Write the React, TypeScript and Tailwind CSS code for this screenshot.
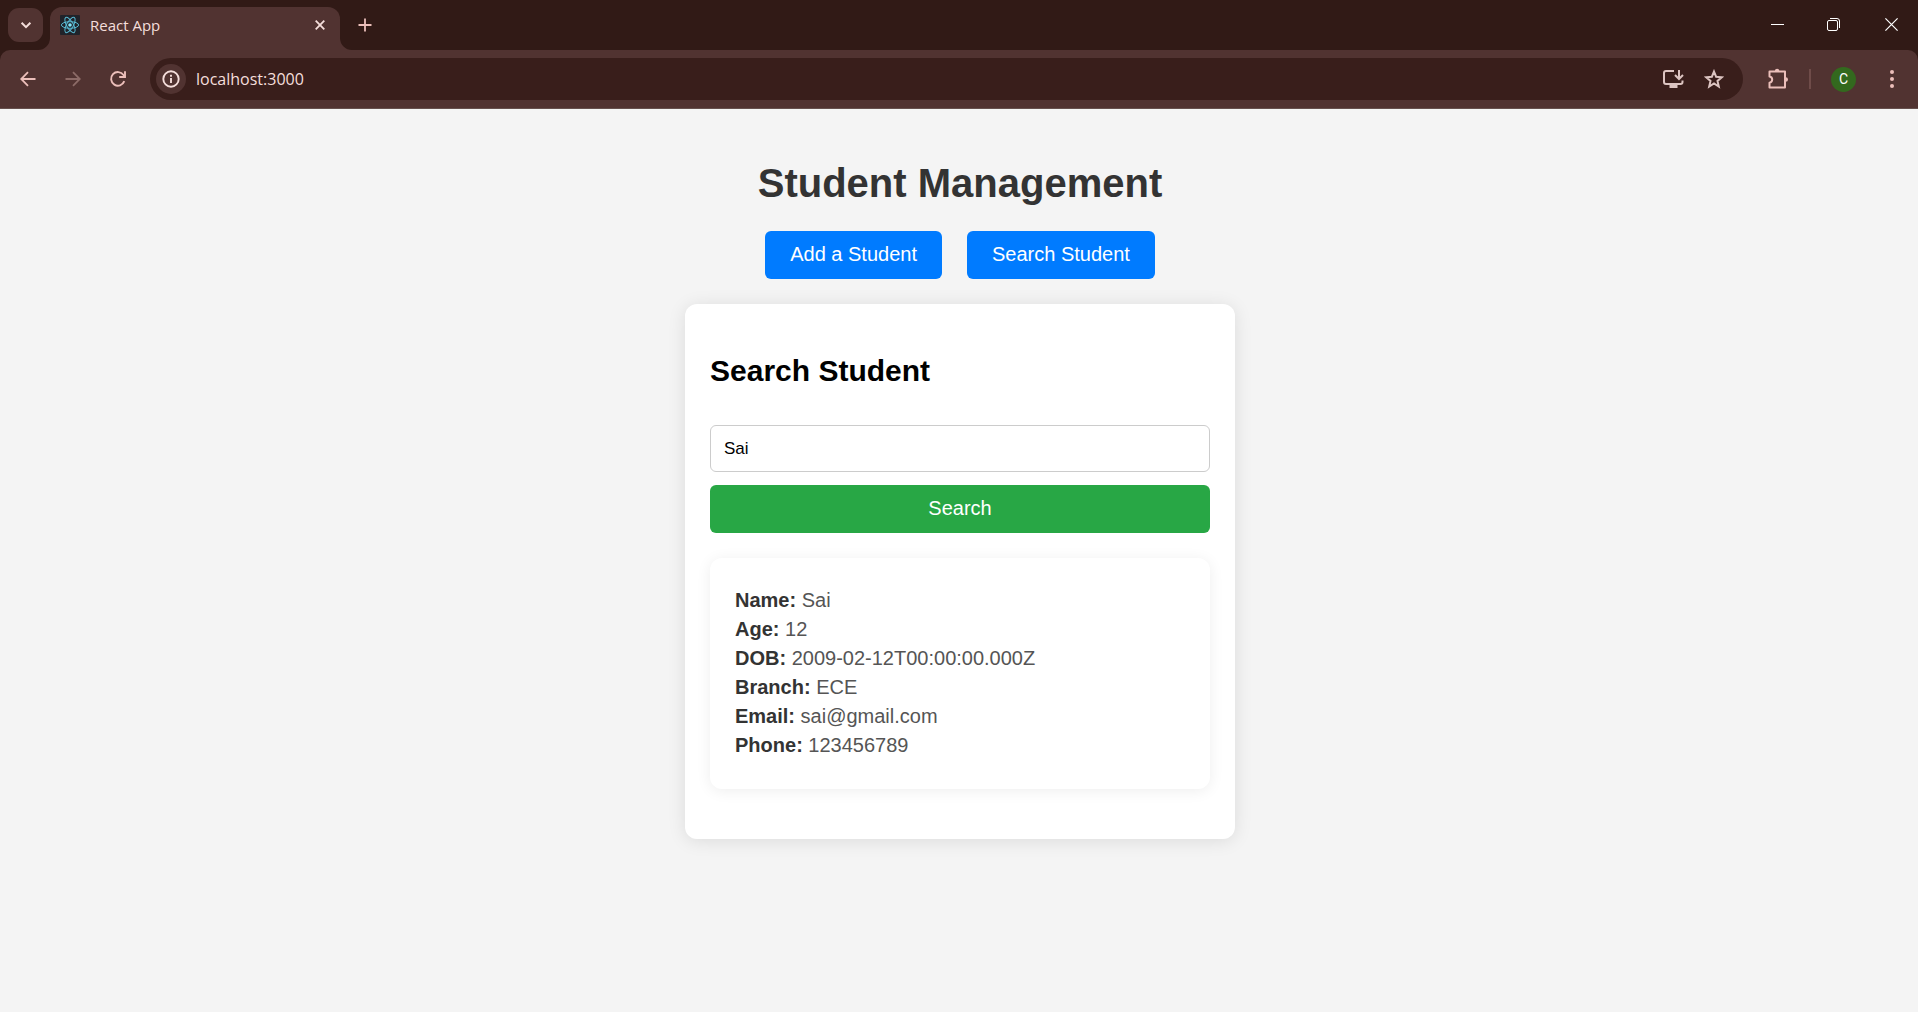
import React, { useState } from "react";

function ReactMark() {
  return (
    <svg viewBox="0 0 20 20" className="size-5 shrink-0" aria-hidden="true">
      <rect width="20" height="20" rx="1" fill="#20232a" />
      <g fill="none" stroke="#58b9d3" strokeWidth="1">
        <ellipse cx="10" cy="10" rx="8.6" ry="3.3" />
        <ellipse cx="10" cy="10" rx="8.6" ry="3.3" transform="rotate(60 10 10)" />
        <ellipse cx="10" cy="10" rx="8.6" ry="3.3" transform="rotate(120 10 10)" />
      </g>
      <circle cx="10" cy="10" r="1.8" fill="#7fe4fb" />
    </svg>
  );
}

function TabStrip() {
  return (
    <div className="flex h-[50px] items-start bg-[#311a16] text-[#f5dedb]">
      <button aria-label="Search tabs" className="mt-2 ml-2 flex h-[34px] w-[35px] items-center justify-center rounded-[11px] bg-[#513331]">
        <svg viewBox="0 0 12 12" className="size-3" fill="none" stroke="currentColor" strokeWidth="2">
          <path d="M1.6 3.8 6 8.2l4.400-4.400" />
        </svg>
      </button>
      <div className="relative mt-[7px] ml-[7px] flex h-[43px] w-[290px] items-start rounded-t-[12px] bg-[#513331] pt-2 pr-[15px] pl-[10px]">
        <svg viewBox="0 0 12 12" className="absolute bottom-0 -left-3 size-3" aria-hidden="true">
          <path d="M12 0v12H0A12 12 0 0 0 12 0Z" fill="#513331" />
        </svg>
        <svg viewBox="0 0 12 12" className="absolute -right-3 bottom-0 size-3" aria-hidden="true">
          <path d="M0 0v12h12A12 12 0 0 1 0 0Z" fill="#513331" />
        </svg>
        <ReactMark />
        <span className="ml-[10px] grow text-[15px] leading-5">React App</span>
        <button aria-label="Close tab" className="flex h-5 items-center">
          <svg viewBox="0 0 10 10" className="size-[10px]" fill="none" stroke="currentColor" strokeWidth="1.8">
            <path d="m.7.7 8.600 8.600M9.300.7.7 9.300" />
          </svg>
        </button>
      </div>
      <button aria-label="New tab" className="mt-[15px] ml-[18px] flex h-5 items-center text-[#ecbfba]">
        <svg viewBox="0 0 14 14" className="size-[14px]" fill="none" stroke="currentColor" strokeWidth="1.8">
          <path d="M7 .5v13M.5 7h13" />
        </svg>
      </button>
      <div className="ml-auto flex h-[49px] text-white">
        <button aria-label="Minimize" className="flex w-14 items-center justify-center">
          <svg viewBox="0 0 13 13" className="size-[13px]" stroke="currentColor">
            <path d="M0 6.500h13" />
          </svg>
        </button>
        <button aria-label="Restore" className="flex w-14 items-center justify-center">
          <svg viewBox="0 0 13 13" className="size-[13px]" fill="none" stroke="currentColor">
            <rect x=".5" y="2.500" width="10" height="10" rx="1.500" />
            <path d="M3 .5h7a2.500 2.500 0 0 1 2.500 2.500v7" />
          </svg>
        </button>
        <button aria-label="Close window" className="flex w-[57px] items-center justify-center pl-1">
          <svg viewBox="0 0 13 13" className="size-[13px]" fill="none" stroke="currentColor" strokeWidth="1.200">
            <path d="m.4.4 12.200 12.200M12.600.4.4 12.600" />
          </svg>
        </button>
      </div>
    </div>
  );
}

function Toolbar() {
  const [address, setAddress] = useState("localhost:3000");
  return (
    <div className="bg-[#311a16]">
      <div className="flex h-[59px] items-start rounded-t-[10px] border-b border-[#66504d] bg-[#513331] pt-2 text-[#ecbfba]">
        <div className="flex h-[42px] items-center pl-5">
          <button aria-label="Back">
            <svg viewBox="0 0 16 16" className="size-4" fill="none" stroke="currentColor" strokeWidth="1.800">
              <path d="M15.500 8H1.500M8 1.200 1.200 8 8 14.800" />
            </svg>
          </button>
          <button aria-label="Forward" className="ml-[29px] text-[#8c6b67]">
            <svg viewBox="0 0 16 16" className="size-4" fill="none" stroke="currentColor" strokeWidth="1.800">
              <path d="M.5 8h14M8 1.200 14.800 8 8 14.800" />
            </svg>
          </button>
          <button aria-label="Reload" className="ml-7">
            <svg viewBox="0 0 18 18" className="size-[18px]" fill="none" stroke="currentColor" strokeWidth="1.900">
              <path d="M15.300 11.200A6.800 6.800 0 1 1 14.500 5L16 7" />
              <path d="M16 1.300V7h-5.800" />
            </svg>
          </button>
        </div>
        <div className="ml-[23px] flex h-[42px] grow items-center rounded-full bg-[#391e1b] pr-[19px] pl-[6px]">
          <button aria-label="Site information" className="flex size-[30px] items-center justify-center rounded-full bg-[#513331] text-[#f5dedb]">
            <svg viewBox="0 0 18 18" className="size-[18px]" fill="none" stroke="currentColor" strokeWidth="1.900">
              <circle cx="9" cy="9" r="7.700" />
              <path d="M9 8v5M9 4.800v1.900" />
            </svg>
          </button>
          <input
            aria-label="Address"
            value={address}
            onChange={(e) => setAddress(e.target.value)}
            className="ml-[10px] min-w-0 grow bg-transparent text-base leading-6 text-[#f5dedb] outline-none"
          />
          <div className="flex items-center gap-5 text-[#dcc4c1]">
            <button aria-label="Install app">
              <svg viewBox="0 0 22 20" className="h-5 w-[22px]" fill="none" stroke="currentColor" strokeWidth="2">
                <path d="M12 2H4a2 2 0 0 0-2 2v9a2 2 0 0 0 2 2h14.500a2 2 0 0 0 2-2v-1.500" />
                <path d="M17 1v8M13 6l4 4 4-4" />
                <path d="M7.500 17.500h8" strokeWidth="3" />
              </svg>
            </button>
            <button aria-label="Bookmark this page">
              <svg viewBox="0 0 20 20" className="size-5" fill="none" stroke="currentColor" strokeWidth="2">
                <path d="m10 2.500 2.100 5.200 5.700.5-4.300 3.700 1.300 5.600-4.800-3-4.800 3 1.300-5.600-4.300-3.700 5.700-.5Z" />
              </svg>
            </button>
          </div>
        </div>
        <div className="flex h-[42px] items-center pr-6 pl-6">
          <button aria-label="Extensions">
            <svg viewBox="0 0 22 22" className="size-[22px]" fill="none" stroke="currentColor" strokeWidth="2" strokeLinejoin="round">
              <path d="M2.500 3.500H18v16H2.500v-4.800c1.600-.2 2.700-1.500 2.700-3.100S4.100 8.700 2.500 8.500Z" />
              <path d="M7.900 3a2.200 2.200 0 0 1 4.400 0ZM18.800 9.300a2.200 2.200 0 0 1 0 4.400Z" fill="currentColor" stroke="none" />
            </svg>
          </button>
          <span className="ml-5 h-5 w-[2px] bg-[#6f4c49]" />
          <button aria-label="Profile" className="ml-5 flex size-[25px] items-center justify-center rounded-full bg-[#33691e] font-[Roboto] text-[14px] text-white">
            C
          </button>
          <button aria-label="Browser menu" className="ml-[34px]">
            <svg viewBox="0 0 4 18" className="h-[18px] w-1" fill="currentColor">
              <circle cx="2" cy="2" r="2" />
              <circle cx="2" cy="9" r="2" />
              <circle cx="2" cy="16" r="2" />
            </svg>
          </button>
        </div>
      </div>
    </div>
  );
}

const details = [
  ["Name", "Sai"],
  ["Age", "12"],
  ["DOB", "2009-02-12T00:00:00.000Z"],
  ["Branch", "ECE"],
  ["Email", "sai@gmail.com"],
  ["Phone", "123456789"],
];

function StudentPage() {
  const [query, setQuery] = useState("Sai");
  return (
    <main className="flex grow flex-col items-center bg-[#f4f4f4] pt-[50px] pr-4 pb-12 pl-[18px] font-['Liberation_Sans',Arial,sans-serif] text-xl">
      <h1 className="text-[40px] leading-[48px] font-bold text-[#333333]">Student Management</h1>
      <nav className="mt-6 flex gap-[25px] text-white">
        <button className="h-12 rounded-[6px] bg-[#007bff] px-[25px] pb-[2px]">Add a Student</button>
        <button className="h-12 rounded-[6px] bg-[#007bff] px-[25px] pb-[2px]">Search Student</button>
      </nav>
      <section className="mt-[25px] w-full max-w-[550px] rounded-[12px] bg-white px-[25px] pt-[50px] pb-[50px] shadow-[0_2px_18px_rgba(0,0,0,0.1)]">
        <h2 className="text-3xl leading-[34px] font-bold text-black">Search Student</h2>
        <form className="mt-[37px] flex flex-col gap-[13px]" onSubmit={(e) => e.preventDefault()}>
          <input
            aria-label="Student name"
            value={query}
            onChange={(e) => setQuery(e.target.value)}
            className="h-[47px] rounded-[6px] border border-[#cccccc] bg-white px-[13px] text-[17px] text-black outline-none"
          />
          <button className="h-12 rounded-[6px] bg-[#28a745] pb-[2px] text-white">Search</button>
        </form>
        <div className="mt-[25px] rounded-[12px] bg-white px-[25px] pt-[28px] pb-[29px] leading-[29px] text-[#555555] shadow-[0_2px_15px_rgba(0,0,0,0.07)]">
          {details.map(([label, value]) => (
            <p key={label}>
              <strong className="font-bold text-[#333333]">{label}:</strong> {value}
            </p>
          ))}
        </div>
      </section>
    </main>
  );
}

export default function App() {
  return (
    <div className="flex min-h-screen flex-col font-['Segoe_UI','Open_Sans','Noto_Sans',sans-serif]">
      <header>
        <TabStrip />
        <Toolbar />
      </header>
      <StudentPage />
    </div>
  );
}
